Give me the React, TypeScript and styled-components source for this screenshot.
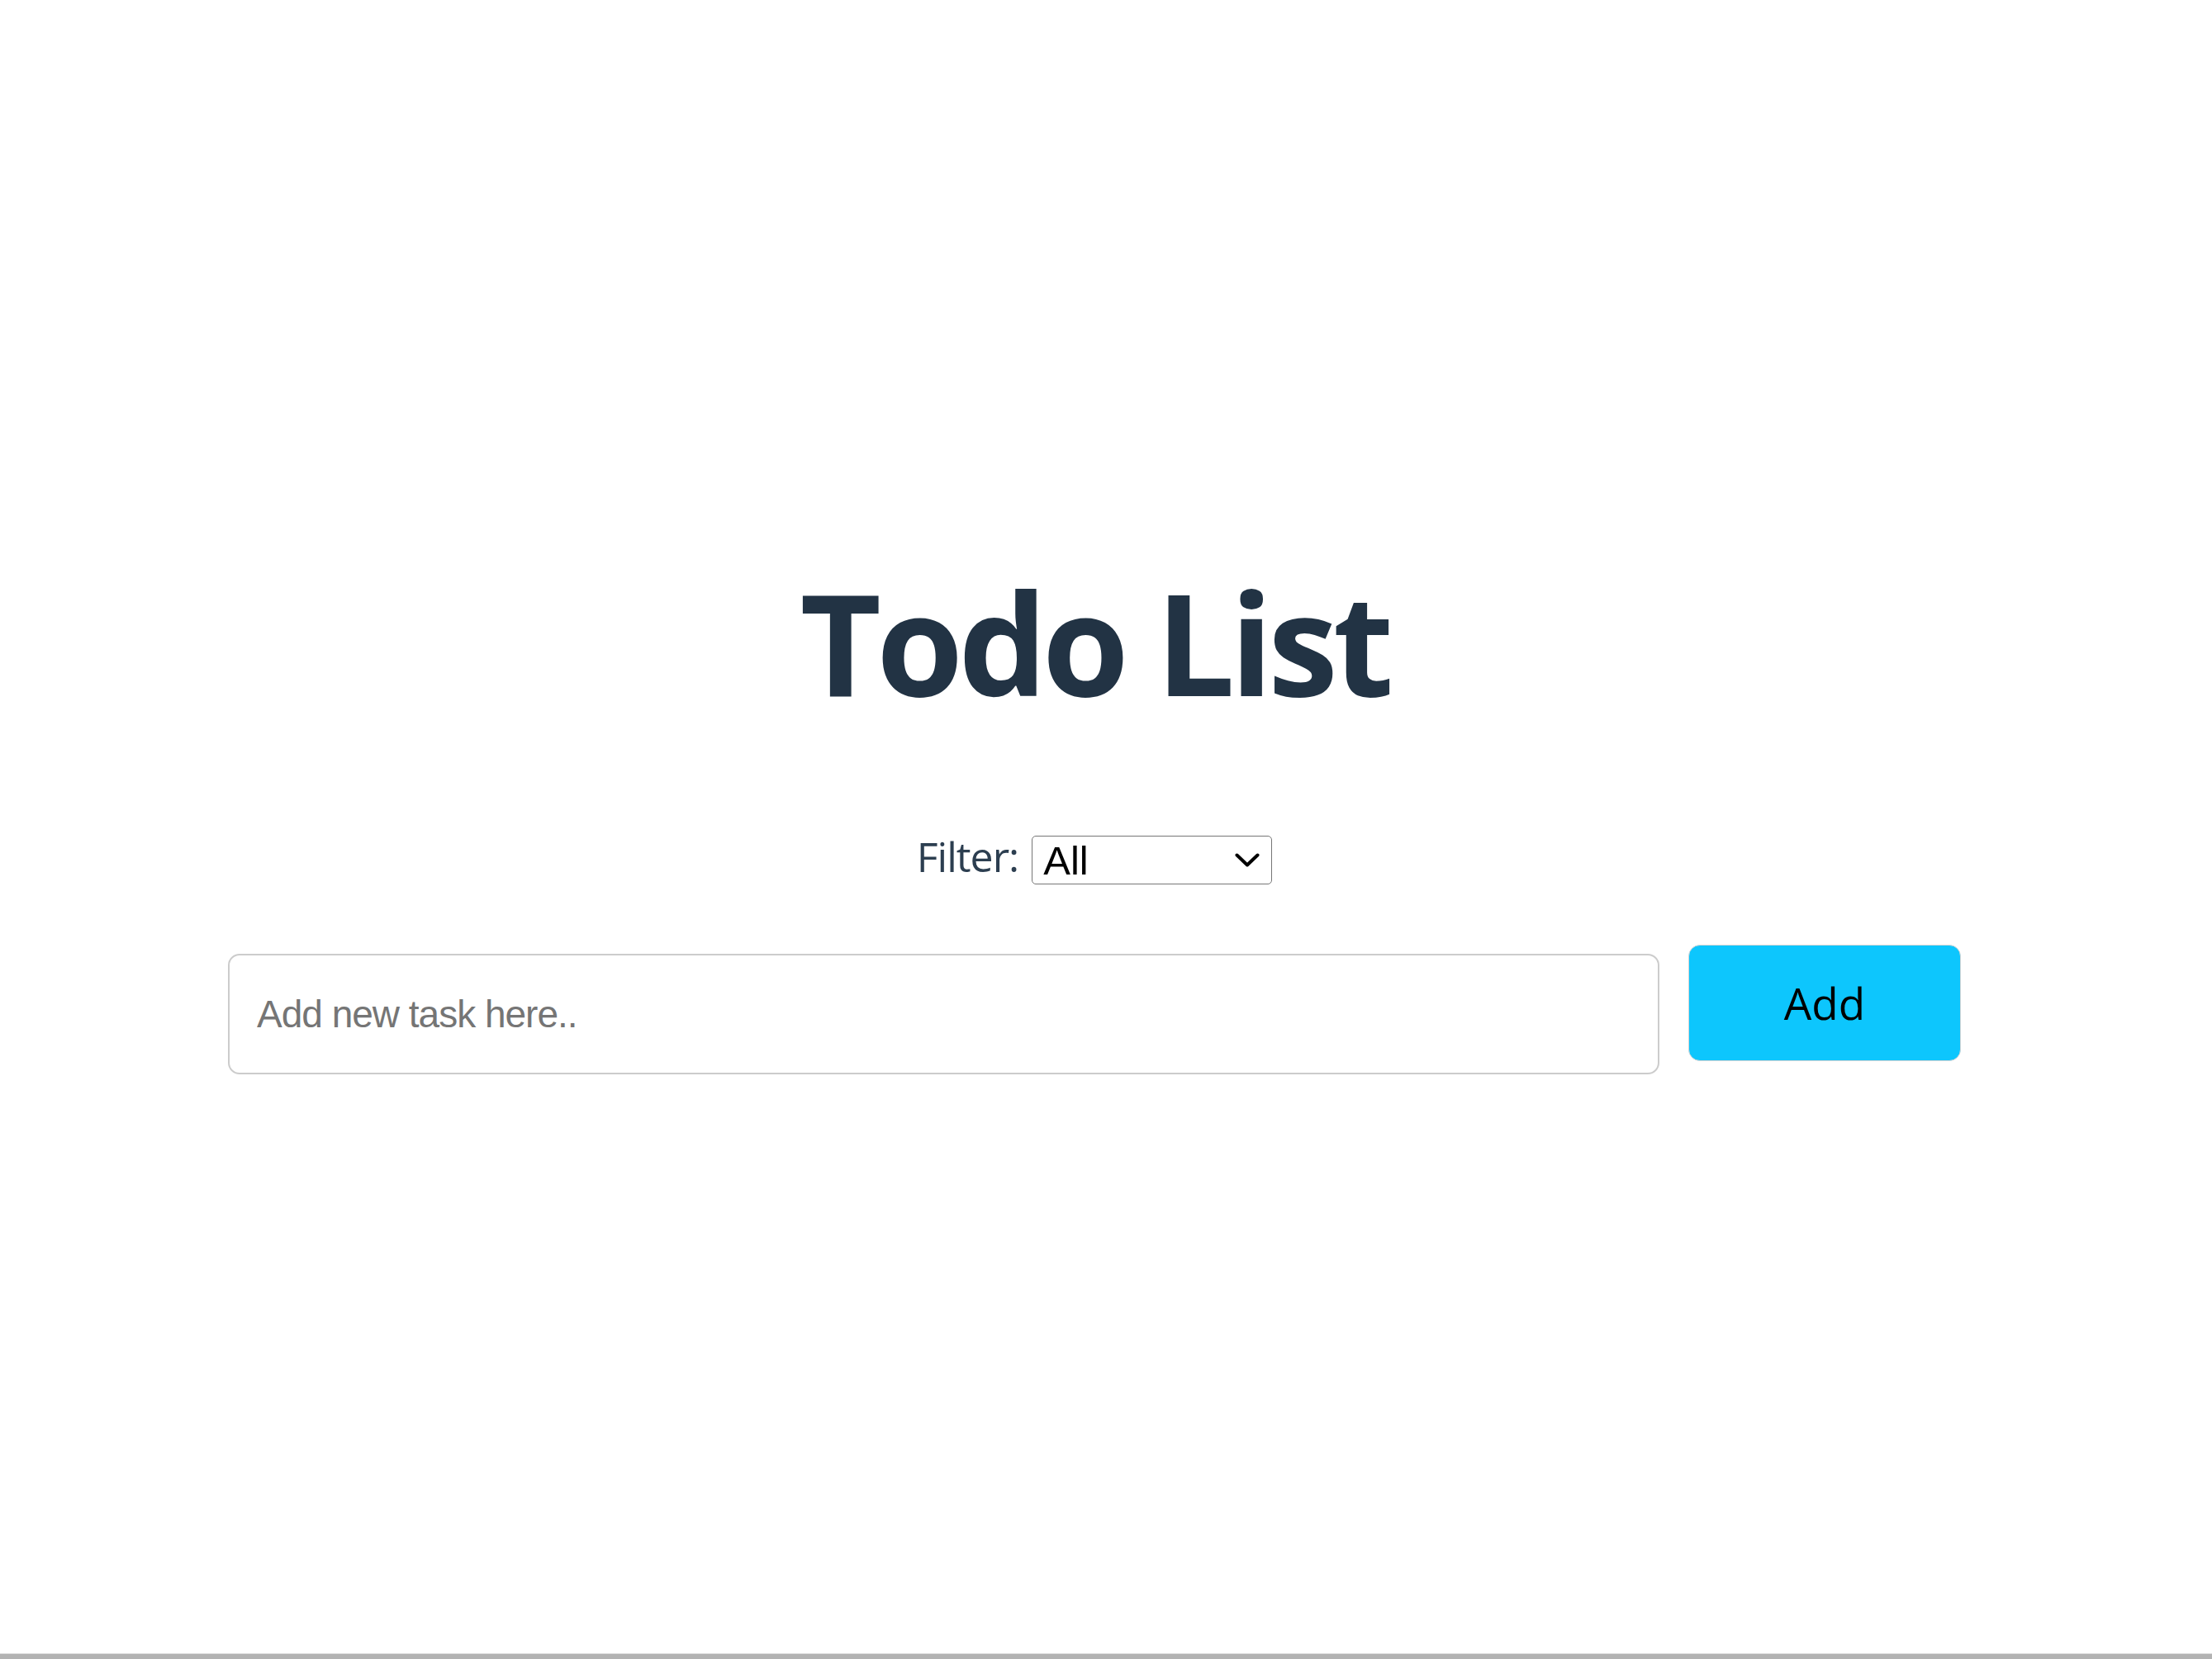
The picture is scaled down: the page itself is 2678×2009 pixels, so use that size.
import React from "react";
import styled, { createGlobalStyle } from "styled-components";

const GlobalStyle = createGlobalStyle`
  html, body { margin: 0; padding: 0; background: #ffffff; }
  * { box-sizing: border-box; }
`;

const Page = styled.div`
  min-height: 100vh;
  display: flex;
  flex-direction: column;
  background: #ffffff;
`;

const Main = styled.main`
  flex: 1;
  display: flex;
  flex-direction: column;
  align-items: center;
  padding: 692px 28px 0 0;
`;

const Title = styled.h1`
  margin: 0;
  font-family: "Open Sans", "Noto Sans", sans-serif;
  font-weight: 700;
  font-size: 170px;
  letter-spacing: -6px;
  line-height: 1;
  color: #223344;
`;

const FilterRow = styled.div`
  margin-top: 150px;
  height: 59px;
  display: flex;
  align-items: center;
  gap: 16px;
`;

const FilterLabel = styled.label`
  margin-bottom: 8px;
  font-family: "Open Sans", "Noto Sans", sans-serif;
  font-size: 50px;
  letter-spacing: -1px;
  line-height: 59px;
  color: #2c3e50;
`;

const SelectWrap = styled.div`
  position: relative;
  display: flex;
`;

const Select = styled.select`
  appearance: none;
  -webkit-appearance: none;
  width: 291px;
  height: 59px;
  border: 1px solid #767676;
  border-radius: 5px;
  padding: 0 0 0 13px;
  font-family: "Liberation Sans", Arial, sans-serif;
  font-size: 49px;
  color: #000;
  background: #fff;
`;

const Chevron = styled.svg`
  position: absolute;
  right: 15px;
  top: 50%;
  transform: translateY(-50%);
  pointer-events: none;
`;

const AddRow = styled.form`
  margin-top: 73px;
  width: 2098px;
  display: flex;
  align-items: flex-start;
  gap: 35px;
`;

const TaskInput = styled.input`
  flex: 1;
  height: 146px;
  margin-top: 11px;
  border: 2px solid #cccccc;
  border-radius: 14px;
  padding: 0 33px;
  font-family: "Liberation Sans", Arial, sans-serif;
  font-size: 46px;
  letter-spacing: -1px;
  color: #000;
  outline: none;
  &::placeholder {
    color: #757575;
  }
`;

const AddButton = styled.button`
  width: 330px;
  height: 141px;
  border: 1px solid #d6d6d6;
  border-radius: 14px;
  background: #0dc6fd;
  color: #000;
  font-family: "Open Sans", "Noto Sans", sans-serif;
  font-size: 53px;
  cursor: pointer;
`;

const BottomBar = styled.div`
  height: 7px;
  background: #b3b3b3;
  border-top: 1px solid #dcdcdc;
`;

export default function App() {
  return (
    <Page>
      <GlobalStyle />
      <Main>
        <Title>Todo List</Title>
        <FilterRow>
          <FilterLabel htmlFor="filter">Filter:</FilterLabel>
          <SelectWrap>
            <Select id="filter" defaultValue="all">
              <option value="all">All</option>
              <option value="completed">Completed</option>
              <option value="incomplete">Incomplete</option>
            </Select>
            <Chevron width="30" height="18" viewBox="0 0 30 18" fill="none">
              <path d="M2.5 2.5 L15 14.5 L27.5 2.5" stroke="#000" strokeWidth="4" strokeLinecap="round" strokeLinejoin="round" />
            </Chevron>
          </SelectWrap>
        </FilterRow>
        <AddRow onSubmit={(e) => e.preventDefault()}>
          <TaskInput type="text" placeholder="Add new task here.." />
          <AddButton type="submit">Add</AddButton>
        </AddRow>
      </Main>
      <BottomBar />
    </Page>
  );
}
